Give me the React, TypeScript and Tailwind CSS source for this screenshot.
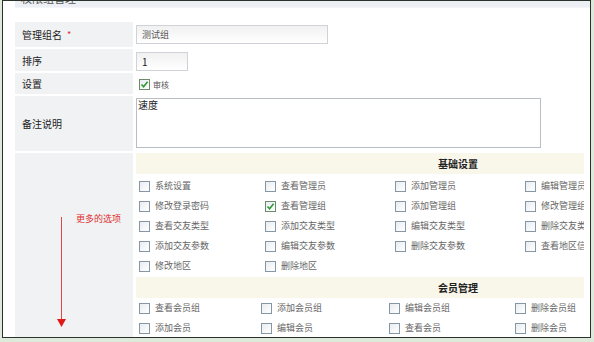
import React from 'react';

const basic: { label: string; checked?: boolean }[][] = [
  [{ label: '系统设置' }, { label: '查看管理员' }, { label: '添加管理员' }, { label: '编辑管理员' }],
  [{ label: '修改登录密码' }, { label: '查看管理组', checked: true }, { label: '添加管理组' }, { label: '修改管理组' }],
  [{ label: '查看交友类型' }, { label: '添加交友类型' }, { label: '编辑交友类型' }, { label: '删除交友类型' }],
  [{ label: '添加交友参数' }, { label: '编辑交友参数' }, { label: '删除交友参数' }, { label: '查看地区信息' }],
  [{ label: '修改地区' }, { label: '删除地区' }],
];

const member: { label: string; checked?: boolean }[][] = [
  [{ label: '查看会员组' }, { label: '添加会员组' }, { label: '编辑会员组' }, { label: '删除会员组' }],
  [{ label: '添加会员' }, { label: '编辑会员' }, { label: '查看会员' }, { label: '删除会员' }],
];

function Box({ checked }: { checked?: boolean }) {
  return (
    <span
      className={`flex h-[11px] w-[11px] shrink-0 items-center justify-center border bg-gradient-to-br from-[#e9edf1] to-white ${
        checked ? 'border-[#6d8a6d]' : 'border-[#8796a4]'
      }`}
    >
      {checked && (
        <svg width="9" height="9" viewBox="0 0 9 9">
          <path d="M1.5 4.5 L3.6 6.8 L7.6 1.8" fill="none" stroke="#2f9a2f" strokeWidth="1.6" />
        </svg>
      )}
    </span>
  );
}

function Item({ label, checked }: { label: string; checked?: boolean }) {
  return (
    <div className="flex items-center gap-[5px] whitespace-nowrap text-[9px] text-[#666]">
      <Box checked={checked} />
      <span>{label}</span>
    </div>
  );
}

function SectionHead({ title }: { title: string }) {
  return (
    <div className="flex h-[21px] items-center justify-center bg-[#f9f6ea] pl-[196px] text-[10px] font-bold text-[#222]">
      {title}
    </div>
  );
}

export default function App() {
  const cjk = { fontFamily: '"Noto Sans CJK SC", "Liberation Sans", sans-serif' };
  return (
    <div className="h-[342px] w-[594px] overflow-hidden bg-[#dde9da] pl-[2px]" style={cjk}>
      <div className="h-[338px] w-[589px] overflow-hidden border border-[#2a332a] bg-white">
        {/* top caption band, cut off */}
        <div className="ml-[12px] h-[7px] overflow-hidden border-b border-[#f3f5f8] bg-[#eceff4]">
          <div className="-mt-[9px] pl-[6px] text-[11px] leading-[12px] text-[#555]">权限组管理</div>
        </div>

        <div className="mt-[14px] grid grid-cols-[118px_448px] gap-x-[3px] gap-y-[2px] pl-[12px]">
          {/* 管理组名 */}
          <div className="flex h-[25px] items-center bg-[#f1f2f4] pl-[7px] text-[10px] text-[#222]">
            管理组名<span className="ml-[5px] text-[9px] text-[#e03030]">*</span>
          </div>
          <div className="flex items-center">
            <div className="flex h-[19px] w-[192px] items-center border border-[#cfd2d6] bg-gradient-to-b from-[#f1f1f1] to-white pl-[5px] text-[9px] text-[#555]">
              测试组
            </div>
          </div>

          {/* 排序 */}
          <div className="flex h-[22px] items-center bg-[#f1f2f4] pl-[7px] text-[10px] text-[#222]">排序</div>
          <div className="flex items-end">
            <div className="flex h-[19px] w-[52px] items-center border border-[#cfd2d6] bg-gradient-to-b from-[#f1f1f1] to-white pl-[5px] text-[10px] text-[#222]">
              1
            </div>
          </div>

          {/* 设置 */}
          <div className="flex h-[21px] items-center bg-[#f1f2f4] pl-[7px] text-[10px] text-[#222]">设置</div>
          <div className="flex items-center pl-[3px] pt-[2px]">
            <div className="flex items-center gap-[3px] text-[8px] text-[#555]">
              <Box checked />
              <span>审核</span>
            </div>
          </div>

          {/* 备注说明 */}
          <div className="flex h-[55px] items-center bg-[#f1f2f4] pl-[7px] text-[10px] text-[#222]">备注说明</div>
          <div className="pt-[2px]">
            <div className="h-[50px] w-[405px] border border-[#b9bec4] bg-white pl-[1px] text-[10px] leading-[11px] text-[#222]">
              速度
            </div>
          </div>

          {/* 更多的选项 */}
          <div className="relative h-[184px] bg-[#f1f2f4]">
            <div className="absolute left-[46px] top-[64px] h-[106px] w-[1px] bg-[#e04848]" />
            <svg className="absolute left-[42px] top-[166px]" width="9" height="8" viewBox="0 0 9 8">
              <path d="M0 0 L9 0 L4.5 8 Z" fill="#e01818" />
            </svg>
            <div className="absolute left-[61px] top-[59px] text-[9px] text-[#e03030]">更多的选项</div>
          </div>
          <div className="h-[184px] overflow-hidden">
            <SectionHead title="基础设置" />
            <div className="pt-[2px]">
              {basic.map((row, i) => (
                <div key={i} className="grid h-[20px] w-[560px] grid-cols-[126px_130px_130px_130px] items-center pl-[3px]">
                  {row.map((it) => (
                    <Item key={it.label} {...it} />
                  ))}
                </div>
              ))}
            </div>
            <div className="mt-[1px]">
              <SectionHead title="会员管理" />
            </div>
            {member.map((row, i) => (
              <div key={i} className="grid h-[20px] w-[560px] grid-cols-[122px_128px_126px_126px] items-center pl-[3px]">
                {row.map((it) => (
                  <Item key={it.label} {...it} />
                ))}
              </div>
            ))}
          </div>
        </div>
      </div>
    </div>
  );
}
